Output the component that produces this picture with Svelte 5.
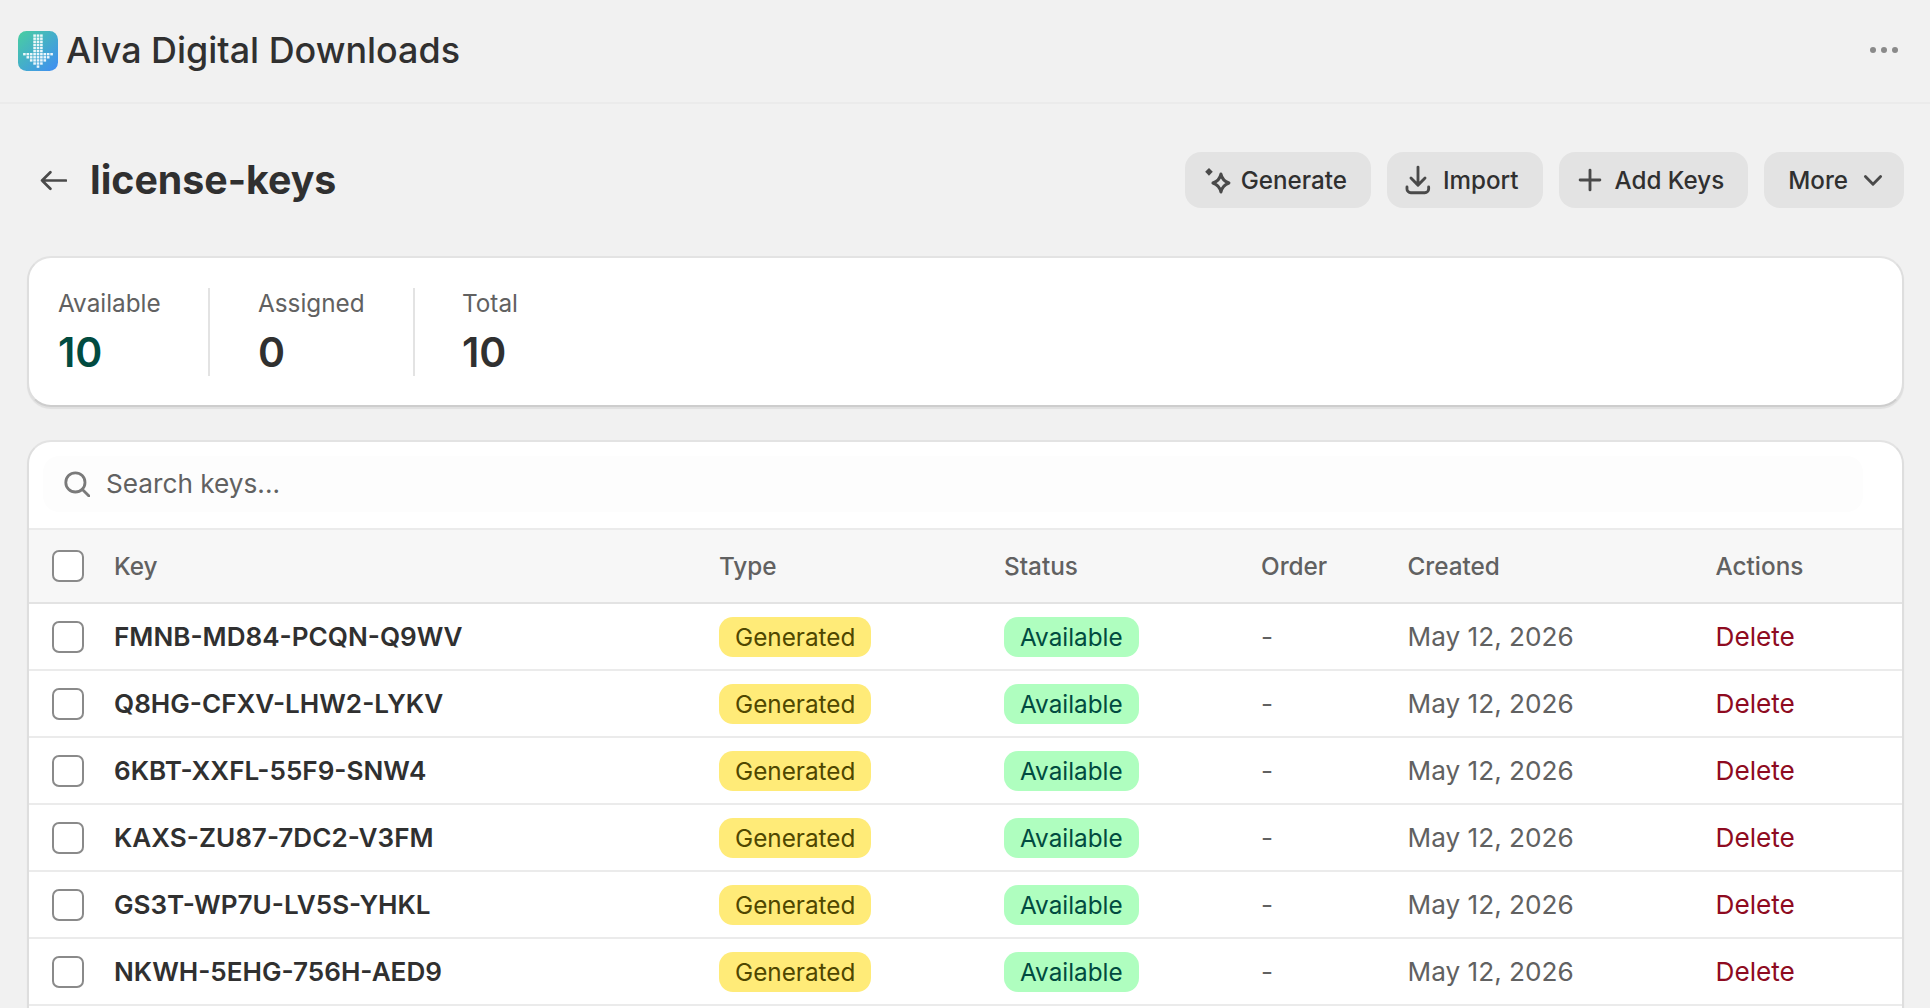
<script>
  const keys = [
    'FMNB-MD84-PCQN-Q9WV',
    'Q8HG-CFXV-LHW2-LYKV',
    '6KBT-XXFL-55F9-SNW4',
    'KAXS-ZU87-7DC2-V3FM',
    'GS3T-WP7U-LV5S-YHKL',
    'NKWH-5EHG-756H-AED9'
  ];
  const dots = [];
  for (let y = 0; y < 6; y++) for (let x = -1; x <= 1; x++) dots.push([x, y]);
  const widths = [4, 3, 2, 1, 0];
  widths.forEach((w, i) => {
    for (let x = -w; x <= w; x++) dots.push([x, 6 + i]);
  });
</script>

<div class="page">
  <header class="topbar">
    <div class="brand">
      <svg class="logo" viewBox="0 0 40 40">
        <defs>
          <linearGradient id="lg" x1="0" y1="0" x2="1" y2="1">
            <stop offset="0" stop-color="#49cfa0" />
            <stop offset="1" stop-color="#3f8cf5" />
          </linearGradient>
        </defs>
        <rect width="40" height="40" rx="8.5" fill="url(#lg)" />
        {#each dots as d}
          <rect x={18.7 + d[0] * 3.4} y={3.4 + d[1] * 3.1} width="2.6" height="2.4" fill="#fff" opacity="0.9" />
        {/each}
      </svg>
      <span class="appname">Alva Digital Downloads</span>
    </div>
    <div class="dots"><i></i><i></i><i></i></div>
  </header>

  <main class="content">
    <div class="titlebar">
      <div class="titleleft">
        <svg class="back" viewBox="0 0 26 20" fill="none" stroke="#4a4a4a" stroke-width="2.6" stroke-linecap="round" stroke-linejoin="round">
          <path d="M25 10H2M10 2l-8 8 8 8" />
        </svg>
        <h1>license-keys</h1>
      </div>
      <div class="actions">
        <button>
          <svg class="ic" viewBox="0 0 20 20" fill="none" stroke="#4a4a4a" stroke-width="1.6" stroke-linejoin="round">
            <path d="M6.3 3.7l2 2-2 2.1-2-2.1z" fill="#4a4a4a" stroke="none" />
            <path d="M12.6 6.9c.5 2.4 1.8 3.8 4.2 4.7-2.4.9-3.7 2.3-4.2 4.7-.5-2.4-1.8-3.8-4.2-4.7 2.4-.9 3.7-2.3 4.2-4.7z" />
          </svg>
          Generate
        </button>
        <button>
          <svg class="ic" viewBox="0 0 20 20" fill="none" stroke="#4a4a4a" stroke-width="1.5" stroke-linecap="round" stroke-linejoin="round">
            <path d="M10 3.2v9.4M6.3 9l3.7 3.7L13.7 9" />
            <path d="M4.2 13.7v1a2 2 0 0 0 2 2h7.4a2 2 0 0 0 2-2v-1" />
          </svg>
          Import
        </button>
        <button>
          <svg class="ic" viewBox="0 0 20 20" fill="none" stroke="#4a4a4a" stroke-width="1.5" stroke-linecap="round">
            <path d="M10 4.8v10.4M4.8 10h10.4" />
          </svg>
          Add Keys
        </button>
        <button class="more">
          More
          <svg class="ic" viewBox="0 0 20 20" fill="none" stroke="#4a4a4a" stroke-width="1.5" stroke-linecap="round" stroke-linejoin="round">
            <path d="M6 8.2l4 4 4-4" />
          </svg>
        </button>
      </div>
    </div>

    <section class="card stats">
      <div class="stat first">
        <div class="label">Available</div>
        <div class="num green">10</div>
      </div>
      <div class="stat second">
        <div class="label">Assigned</div>
        <div class="num">0</div>
      </div>
      <div class="stat third">
        <div class="label">Total</div>
        <div class="num">10</div>
      </div>
    </section>

    <section class="card tablecard">
      <div class="searchwrap">
        <div class="search">
          <svg class="searchic" viewBox="0 0 26 26" fill="none" stroke="#7a7a7a" stroke-width="2.8" stroke-linecap="round">
            <circle cx="11.4" cy="11.4" r="9.6" />
            <path d="M18.4 18.4L25 25" />
          </svg>
          <span>Search keys...</span>
        </div>
      </div>
      <div class="row head">
        <div class="cell"><span class="check"></span></div>
        <div>Key</div>
        <div>Type</div>
        <div>Status</div>
        <div>Order</div>
        <div>Created</div>
        <div>Actions</div>
      </div>
      {#each keys as key}
        <div class="row">
          <div class="cell"><span class="check"></span></div>
          <div class="key">{key}</div>
          <div><span class="badge yellow">Generated</span></div>
          <div><span class="badge mint">Available</span></div>
          <div class="muted">-</div>
          <div class="muted">May 12, 2026</div>
          <div class="del">Delete</div>
        </div>
      {/each}
    </section>
  </main>
</div>

<style>
  :global(body) {
    margin: 0;
    background: #f1f1f1;
    overflow: hidden;
  }
  .page {
    height: 100vh;
    overflow: hidden;
    font-family: Inter, "Liberation Sans", sans-serif;
    font-size: 24.3px;
    color: #303030;
    background: #f1f1f1;
  }
  .topbar {
    height: 102px;
    border-bottom: 2px solid #ebebeb;
    display: flex;
    align-items: center;
    justify-content: space-between;
    padding: 0 32px 0 18px;
    box-sizing: content-box;
  }
  .brand {
    display: flex;
    align-items: center;
    gap: 8px;
  }
  .logo {
    width: 40px;
    height: 40px;
    display: block;
  }
  .appname {
    font-size: 35.9px;
    font-weight: 500;
    color: #303030;
    margin-top: -2px;
  }
  .dots {
    display: flex;
    gap: 5px;
    margin-top: -2px;
  }
  .dots i {
    width: 6px;
    height: 6px;
    border-radius: 50%;
    background: #8a8a8a;
  }
  .content {
    padding: 0 26px 0 27px;
  }
  .titlebar {
    display: flex;
    align-items: center;
    justify-content: space-between;
    height: 56px;
    margin-top: 48px;
  }
  .titleleft {
    display: flex;
    align-items: center;
    padding-left: 13px;
    gap: 23px;
  }
  .back {
    width: 27px;
    height: 21px;
  }
  h1 {
    margin: -2px 0 0;
    font-size: 39.3px;
    font-weight: 650;
    color: #303030;
  }
  .actions {
    display: flex;
    gap: 16px;
  }
  button {
    height: 56px;
    border: 0;
    border-radius: 16px;
    background: #e3e3e3;
    color: #303030;
    font: 500 24.2px Inter, "Liberation Sans", sans-serif;
    display: flex;
    align-items: center;
    gap: 6px;
    padding: 0 24px 0 12px;
  }
  button.more {
    padding: 0 12px 0 24px;
    gap: 6px;
  }
  .ic {
    width: 38px;
    height: 38px;
    flex: none;
  }
  .card {
    background: #fff;
    border-radius: 24px;
    border: 2px solid #dedede;
    border-top-color: #e3e3e3;
    border-bottom-color: #cdcdcd;
    box-shadow: 0 2px 1px rgba(26, 26, 26, 0.08);
  }
  .stats {
    margin-top: 48px;
    height: 151px;
    box-sizing: border-box;
    display: flex;
    align-items: center;
    padding-top: 1px;
  }
  .stat {
    height: 88px;
    box-sizing: border-box;
    padding-left: 29px;
    border-right: 2px solid #e3e3e3;
  }
  .stat.first { width: 181px; }
  .stat.second { width: 205px; padding-left: 48px; }
  .stat.third { border-right: 0; padding-left: 47px; }
  .label {
    color: #616161;
    line-height: 30px;
  }
  .num {
    font-size: 41px;
    font-weight: 600;
    line-height: 48px;
    margin-top: 10px;
    color: #303030;
  }
  .num.green {
    color: #014b40;
  }
  .tablecard {
    margin-top: 33px;
    height: 700px;
    overflow: hidden;
    border-bottom: 0;
  }
  .searchwrap {
    padding: 14px 39px 16px 14px;
    border-bottom: 2px solid #ebebeb;
  }
  .search {
    height: 56px;
    border-radius: 16px;
    background: #fdfdfd;
    display: flex;
    align-items: center;
    padding-left: 21px;
    gap: 16px;
    color: #616161;
    font-size: 26.2px;
  }
  .search span {
    margin-top: -1px;
  }
  .searchic {
    width: 26px;
    height: 26px;
    flex: none;
  }
  .row {
    display: grid;
    grid-template-columns: 85px 605px 285px 257px 146.5px 308px 1fr;
    align-items: center;
    height: 67px;
    box-sizing: border-box;
    border-bottom: 2px solid #ebebeb;
  }
  .row.head {
    height: 74px;
    background: #f7f7f7;
    color: #616161;
    font-weight: 500;
    border-bottom-color: #e3e3e3;
  }
  .cell {
    padding-left: 23px;
    display: flex;
  }
  .check {
    width: 32px;
    height: 32px;
    box-sizing: border-box;
    background: #fff;
    border: 2px solid #8a8a8a;
    border-radius: 7px;
    display: block;
  }
  .key {
    font-weight: 620;
    font-size: 26.1px;
    color: #303030;
  }
  .badge {
    display: inline-flex;
    align-items: center;
    height: 40px;
    padding: 0 16px;
    border-radius: 14px;
    font-size: 24.3px;
  }
  .yellow {
    background: #ffeb78;
    color: #4f4700;
  }
  .mint {
    background: #affebf;
    color: #014b40;
  }
  .muted {
    color: #616161;
    font-size: 26.2px;
  }
  .del {
    color: #8e0b21;
    font-size: 26.2px;
  }
</style>
